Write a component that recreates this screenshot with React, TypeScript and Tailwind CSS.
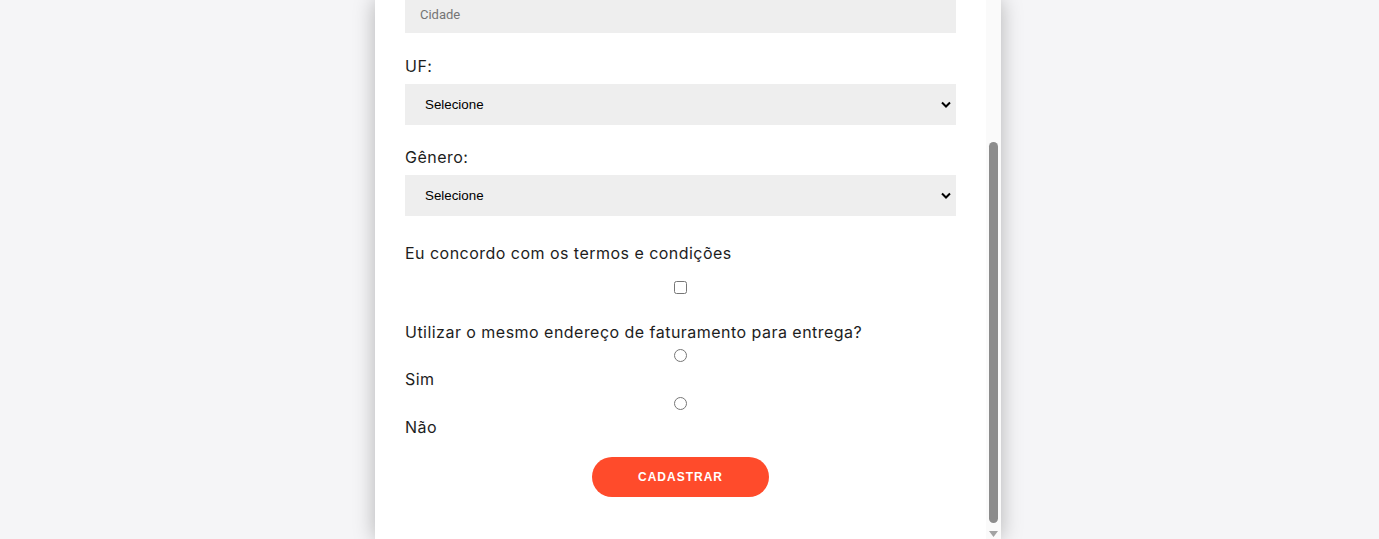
import React from "react";

export default function App() {
  const label = "text-[16px] leading-[24px] tracking-[0.47px] text-[#1d1d1d] font-['Inter',sans-serif]";
  return (
    <div className="w-full h-[539px] bg-[#f5f5f7] flex justify-center pr-[3px] overflow-hidden">
      <div className="w-[626px] h-[539px] bg-white shadow-[0_0_20px_rgba(0,0,0,0.28)] flex flex-row">
        <div className="flex-1 overflow-hidden px-[30px]">
          <div className="-mt-[8px] flex flex-col">
            <input
              placeholder="Cidade"
              className="h-[41px] w-full bg-[#eeeeee] px-[15px] pt-[3px] text-[13px] font-['Roboto',sans-serif] placeholder:text-[#757575] outline-none"
            />
            <label className={`${label} mt-[21px]`}>UF:</label>
            <div className="mt-[6px] h-[41px] w-full bg-[#eeeeee] flex items-center pl-[20px] pr-[5px]">
              <span className="flex-1 text-[13.33px] text-black font-['Liberation_Sans',Arial,sans-serif]">Selecione</span>
              <svg width="10" height="7" viewBox="0 0 10 7">
                <path d="M1 1.5 L5 5.5 L9 1.5" fill="none" stroke="#000" strokeWidth="2" />
              </svg>
            </div>
            <label className={`${label} mt-[20px]`}>Gênero:</label>
            <div className="mt-[6px] h-[41px] w-full bg-[#eeeeee] flex items-center pl-[20px] pr-[5px]">
              <span className="flex-1 text-[13.33px] text-black font-['Liberation_Sans',Arial,sans-serif]">Selecione</span>
              <svg width="10" height="7" viewBox="0 0 10 7">
                <path d="M1 1.5 L5 5.5 L9 1.5" fill="none" stroke="#000" strokeWidth="2" />
              </svg>
            </div>
            <p className={`${label} mt-[25px]`}>Eu concordo com os termos e condições</p>
            <div className="mt-[16px] h-[13px] flex justify-center">
              <input type="checkbox" className="w-[13px] h-[13px] m-0" />
            </div>
            <p className={`${label} mt-[26px]`}>Utilizar o mesmo endereço de faturamento para entrega?</p>
            <div className="h-[23px] flex items-center justify-center">
              <input type="radio" name="entrega" className="w-[13px] h-[13px] m-0" />
            </div>
            <p className={label}>Sim</p>
            <div className="h-[24px] flex items-center justify-center">
              <input type="radio" name="entrega" className="w-[13px] h-[13px] m-0" />
            </div>
            <p className={label}>Não</p>
            <div className="mt-[18px] flex justify-center">
              <button className="w-[177px] h-[40px] rounded-full bg-[#ff4b2b] text-white text-[12px] font-bold tracking-[1px] font-['Liberation_Sans',Arial,sans-serif]">
                CADASTRAR
              </button>
            </div>
          </div>
        </div>
        <div className="w-[15px] h-full bg-[#fafafa] flex flex-col items-center">
          <div className="mt-[142px] h-[381px] w-[9px] rounded-full bg-[#8c8c8c]" />
          <svg width="9" height="6" viewBox="0 0 9 6" className="mt-[8px]">
            <path d="M0 0 H9 L4.5 6 Z" fill="#a3a3a3" />
          </svg>
        </div>
      </div>
    </div>
  );
}
